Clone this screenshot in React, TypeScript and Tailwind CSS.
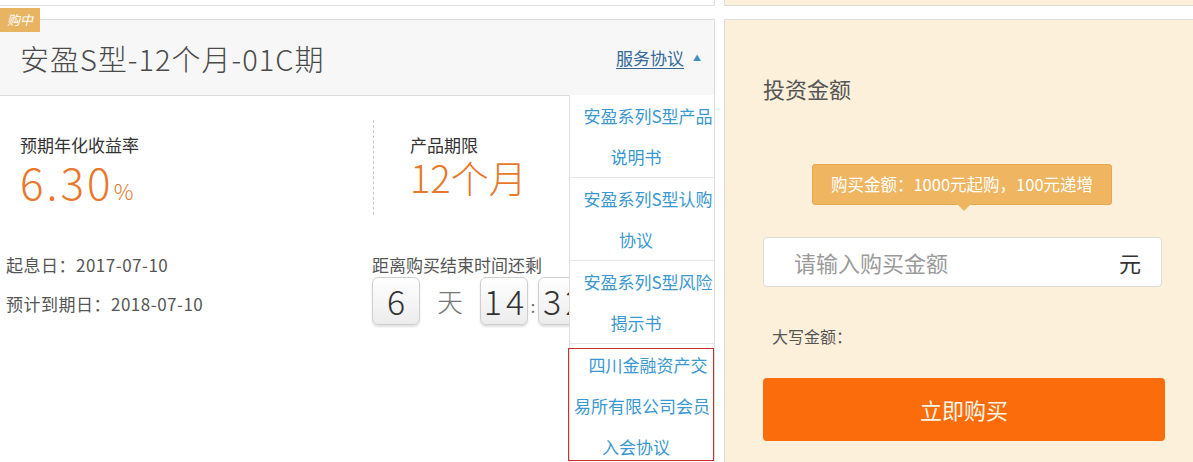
import React from "react";

const font = { fontFamily: '"Noto Sans CJK SC", "Noto Sans", sans-serif' };

function DigitBox({ children, className = "" }: { children: React.ReactNode; className?: string }) {
  return (
    <div
      className={`w-[48px] h-[48px] shrink-0 rounded-[6px] border border-[#cfcfcf] bg-gradient-to-b from-white to-[#ececec] shadow-[0_2px_2px_rgba(0,0,0,0.12)] flex items-center justify-center text-[34px] font-light leading-none text-[#333] ${className}`}
    >
      {children}
    </div>
  );
}

function MenuItem({ lines, last = false }: { lines: { t: string; c: string }[]; last?: boolean }) {
  return (
    <div className={`${last ? "" : "border-b border-[#e6e6e6]"} text-[17px] leading-[41px] text-[#3a98d0]`}>
      {lines.map((l, i) => (
        <div key={i} className={`text-center whitespace-nowrap ${l.c}`}>
          {l.t}
        </div>
      ))}
    </div>
  );
}

export default function App() {
  return (
    <div className="w-[1193px] h-[462px] overflow-hidden bg-white flex" style={font}>
      {/* Left column */}
      <div className="w-[715px] shrink-0">
        <div className="h-[6px] border-b border-r border-[#dddddd] bg-white" />
        <div className="mt-[13px] relative h-[443px] border-t border-r border-[#dddddd] bg-white">
          {/* badge */}
          <div className="absolute -top-[12px] left-0 w-[40px] h-[24px] bg-[#e8b462] flex items-center justify-center text-[13px] italic text-white z-10">
            购中
          </div>
          {/* header */}
          <div className="h-[76px] bg-[#f7f7f7] border-b border-[#dddddd] flex items-center justify-between pl-[20px] pr-[13px]">
            <div className="text-[29px] leading-[36px] font-light text-[#4a4a4a] tracking-[1px]">安盈S型-12个月-01C期</div>
            <div className="flex items-center gap-[9px]">
              <span className="text-[17px] leading-[24px] text-[#35699a] underline underline-offset-[3px]">服务协议</span>
              <span className="text-[8px] text-[#3a8fc8] leading-none">▲</span>
            </div>
          </div>
          {/* body */}
          <div>
            <div className="mt-[24px] flex h-[95px]">
              <div className="w-[374px] pl-[20px] pt-[13px] border-r border-dashed border-[#c8c8c8]">
                <div className="text-[17px] leading-[24px] text-[#333]">预期年化收益率</div>
                <div className="mt-[2px] flex items-baseline text-[#e8782a]">
                  <span className="text-[44px] leading-[44px] font-light tracking-[3px]">6.30</span>
                  <span className="text-[22px] leading-[24px] font-light">%</span>
                </div>
              </div>
              <div className="pl-[36px] pt-[13px]">
                <div className="text-[17px] leading-[24px] text-[#333]">产品期限</div>
                <div className="text-[38px] leading-[40px] font-light text-[#e8782a]">12个月</div>
              </div>
            </div>
            <div className="mt-[30px] flex">
              <div className="w-[372px] pl-[6px] text-[17px] leading-[39px] text-[#555] tracking-[0.5px]">
                <div>起息日：2017-07-10</div>
                <div>预计到期日：2018-07-10</div>
              </div>
              <div className="pt-[8px]">
                <div className="text-[17px] leading-[24px] text-[#555]">距离购买结束时间还剩</div>
                <div className="flex items-center">
                  <DigitBox>6</DigitBox>
                  <span className="ml-[17px] mr-[17px] text-[26px] leading-none font-light text-[#777]">天</span>
                  <DigitBox className="tracking-[4px] pl-[4px]">14</DigitBox>
                  <span className="w-[10px] text-center text-[16px] text-[#666] mt-[10px]">:</span>
                  <DigitBox className="tracking-[4px] pl-[4px] justify-start">32</DigitBox>
                </div>
              </div>
            </div>
          </div>
          {/* dropdown */}
          <div className="absolute top-[75px] right-0 w-[145px] bg-white border-l border-[#dddddd] z-20">
            <MenuItem
              lines={[
                { t: "安盈系列S型产品", c: "pl-[12px]" },
                { t: "说明书", c: "pr-[12px]" },
              ]}
            />
            <MenuItem
              lines={[
                { t: "安盈系列S型认购", c: "pl-[12px]" },
                { t: "协议", c: "pr-[12px]" },
              ]}
            />
            <MenuItem
              lines={[
                { t: "安盈系列S型风险", c: "pl-[12px]" },
                { t: "揭示书", c: "pr-[12px]" },
              ]}
            />
            <div className="relative">
              <MenuItem
                last
                lines={[
                  { t: "四川金融资产交", c: "pl-[12px]" },
                  { t: "易所有限公司会员", c: "" },
                  { t: "入会协议", c: "pr-[12px]" },
                ]}
              />
              <div className="absolute left-[-2px] right-0 top-[4px] h-[113px] border border-[#c9302c] pointer-events-none" />
            </div>
          </div>
        </div>
      </div>

      {/* Right column */}
      <div className="ml-[9px] flex-1">
        <div className="h-[6px] bg-[#fdf0da] border-b border-l border-[#dddddd]" />
        <div className="mt-[13px] h-[443px] bg-[#fdf0da] border-t border-l border-[#dddddd] pl-[38px] pt-[53px]">
          <div className="text-[22px] leading-[30px] text-[#555]">投资金额</div>
          <div className="mt-[61px] ml-[49px] relative w-[300px] h-[41px] rounded-[3px] bg-[#efb560] border border-[#e4a851] flex items-center justify-center text-[16.5px] text-white whitespace-nowrap">
            购买金额：1000元起购，100元递增
            <div className="absolute left-[144px] -bottom-[7px] w-0 h-0 border-l-[7px] border-r-[7px] border-t-[7px] border-l-transparent border-r-transparent border-t-[#efb560]" />
          </div>
          <div className="mt-[32px] w-[399px] h-[50px] rounded-[4px] bg-white border border-[#dcdcdc] flex items-center justify-between pl-[30px] pr-[20px]">
            <span className="text-[22px] leading-none text-[#9a9a9a]">请输入购买金额</span>
            <span className="text-[22px] leading-none text-[#333]">元</span>
          </div>
          <div className="mt-[37px] pl-[9px] text-[16px] leading-[24px] text-[#555]">大写金额：</div>
          <div className="mt-[30px] w-[402px] h-[63px] rounded-[4px] bg-[#fb6c0c] flex items-center justify-center text-[22px] text-[#fff6e6]">
            立即购买
          </div>
        </div>
      </div>
    </div>
  );
}
